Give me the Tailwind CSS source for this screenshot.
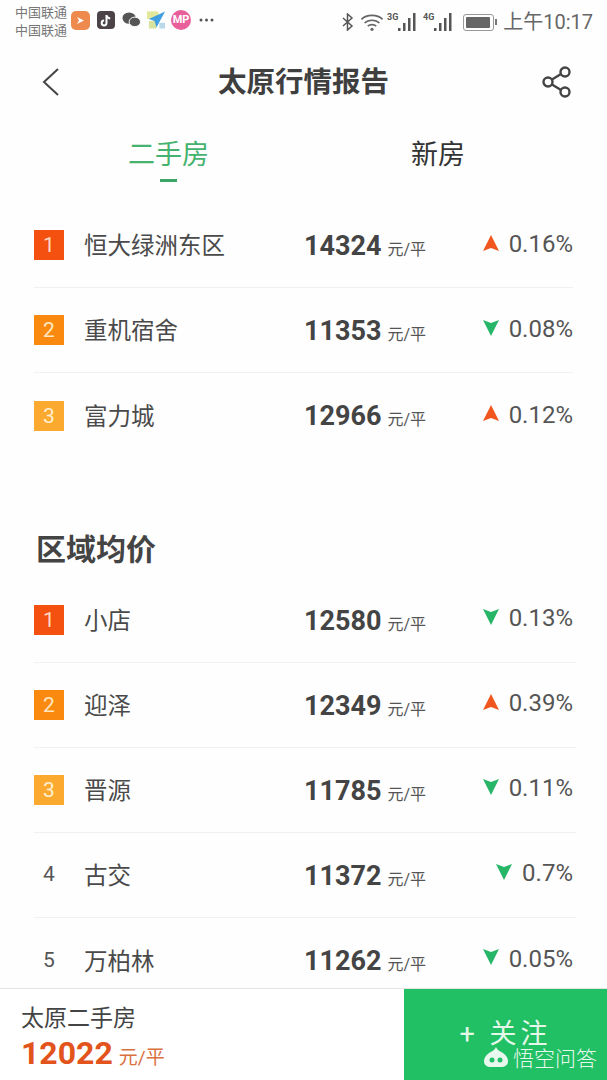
<!DOCTYPE html>
<html lang="zh-CN">
  <head>
    <meta charset="UTF-8" />
    <title>太原行情报告</title>
    <script src="https://cdn.jsdelivr.net/npm/@tailwindcss/browser@4"></script>
  </head>
  <body class="bg-white">
    <div class="relative w-[607px] h-[1080px] overflow-hidden flex flex-col bg-[#fefefe] text-[#444] font-['Roboto','Noto_Sans_CJK_SC',sans-serif]">
      <!-- status bar -->
      <div class="h-[44px] flex items-center pl-[15px] pr-[14px] text-[#666]">
        <div class="text-[13px] leading-[18px] w-[56px] text-[#777]">
          <div>中国联通</div>
          <div>中国联通</div>
        </div>
        <div class="flex items-center -mt-[4px]">
          <div class="w-[19px] h-[19px] rounded-[5px] bg-[#ee8a4e] flex items-center justify-center">
            <svg width="11" height="11" viewBox="0 0 11 11"><path d="M2 2l7 3.500L2 9l2-3.500z" fill="#fff" /></svg>
          </div>
          <div class="w-[18px] h-[18px] ml-[7px] rounded-[4px] bg-[#4b4347] flex items-center justify-center">
            <svg width="12" height="13" viewBox="0 0 12 13" fill="none" stroke="#fff" stroke-width="2"><path d="M6.500 1v8a2.400 2.400 0 1 1-2.400-2.400M6.500 1.500c.5 1.800 1.800 2.800 3.700 3" /></svg>
          </div>
          <svg class="ml-[7px]" width="19" height="18" viewBox="0 0 20 18" fill="#555"><ellipse cx="7.500" cy="7" rx="7" ry="6" /><ellipse cx="13.500" cy="11" rx="6" ry="5" stroke="#fff" stroke-width="1" /></svg>
          <svg class="ml-[5px]" width="20" height="20" viewBox="0 0 21 20"><rect x="1" y="1" width="12" height="8" fill="#e3e79a" /><rect x="3" y="11" width="8" height="8" fill="#d9e3a0" /><rect x="14" y="13" width="6" height="6" fill="#b9d8ea" /><path d="M20 1 3 9l6 2 2 7z" fill="#3f9fe0" /></svg>
          <div class="w-[20px] h-[20px] ml-[5px] rounded-full bg-[#e85f9b] text-white text-[11px] leading-[20px] font-bold text-center">MP</div>
          <svg class="ml-[8px]" width="15" height="4" viewBox="0 0 15 4" fill="#555"><circle cx="2" cy="2" r="1.500" /><circle cx="7.500" cy="2" r="1.500" /><circle cx="13" cy="2" r="1.500" /></svg>
        </div>
        <div class="ml-auto flex items-center">
          <svg width="14" height="18" viewBox="0 0 14 18" fill="none" stroke="#555" stroke-width="1.500"><path d="M2 5l9 8-4.500 4V1L11 5l-9 8" /></svg>
          <svg class="ml-[5px]" width="24" height="19" viewBox="0 0 22 18" fill="none" stroke="#666" stroke-width="1.600"><path d="M1 6c5-5 15-5 20 0M4 9.500c3.500-3.500 10.500-3.500 14 0M7 12.500c2-2 6-2 8 0" /><circle cx="11" cy="15.500" r="1.500" fill="#666" stroke="none" /></svg>
          <svg class="ml-[3px]" width="31" height="20" viewBox="0 0 31 20" fill="#555"><text x="0" y="8" font-size="9" font-weight="700" font-family="Roboto">3G</text><rect x="11" y="16" width="2.500" height="3" /><rect x="16" y="11" width="2.500" height="8" /><rect x="21" y="6" width="2.500" height="13" /><rect x="26" y="1" width="2.500" height="18" /></svg>
          <svg class="ml-[5px]" width="31" height="20" viewBox="0 0 31 20" fill="#555"><text x="0" y="8" font-size="9" font-weight="700" font-family="Roboto">4G</text><rect x="11" y="16" width="2.500" height="3" /><rect x="16" y="11" width="2.500" height="8" /><rect x="21" y="6" width="2.500" height="13" /><rect x="26" y="1" width="2.500" height="18" /></svg>
          <div class="flex items-center ml-[9px]">
            <div class="w-[31px] h-[17px] rounded-[3px] border border-[#999] p-[2px]"><div class="h-full w-[24px] bg-[#666] rounded-[1px]"></div></div>
            <div class="w-[2px] h-[6px] bg-[#777] ml-[1px]"></div>
          </div>
          <div class="text-[20px] leading-none text-[#666] ml-[6px]">上午10:17</div>
        </div>
      </div>

      <!-- title -->
      <div class="relative h-[76px] flex items-center justify-center pt-[2px]">
        <svg class="absolute left-[41px] top-[23px]" width="20" height="30" viewBox="0 0 20 30" fill="none" stroke="#444" stroke-width="2"><path d="M17 2 3 15l14 13" /></svg>
        <h1 class="text-[28.500px] font-bold text-[#3f3f3f] leading-none">太原行情报告</h1>
        <svg class="absolute left-[541px] top-[21px]" width="31" height="33" viewBox="0 0 31 33" fill="none" stroke="#444" stroke-width="2.400"><circle cx="24" cy="7" r="4.500" /><circle cx="7" cy="17" r="4.500" /><circle cx="24" cy="27" r="4.500" /><path d="m11 14.500 9-5.500M11 19.500l9 5.500" /></svg>
      </div>

      <!-- tabs -->
      <div class="h-[83px] flex items-start">
        <div class="w-[337px] flex flex-col items-center pt-[20px]">
          <div class="text-[27px] leading-[30px] text-[#45b36f]">二手房</div>
          <div class="w-[17px] h-[3px] bg-[#3aa566] mt-[9px]"></div>
        </div>
        <div class="w-[202px] text-center pt-[20px] text-[27px] leading-[30px] text-[#333]">新房</div>
      </div>

      <!-- hot communities -->
      <div class="ml-[34px] w-[539px]">
        <div class="h-[85px] flex items-center border-b border-[#f1f1f1]">
          <div class="w-[51px]"><div class="w-[30px] h-[30px] bg-[#f4500f] text-[#ffd9c4] text-[21px] leading-[30px] text-center">1</div></div>
          <div class="w-[220px] mt-[4px] -ml-[1px] text-[23.500px] text-[#4a4a4a]">恒大绿洲东区</div>
          <div class="flex items-baseline mt-[2px]"><span class="text-[27px] font-bold text-[#444]">14324</span><span class="text-[16px] ml-[6px] text-[#555]">元/平</span></div>
          <div class="ml-auto flex items-center gap-[10px] -mt-[2px]">
            <svg class="-mt-[3px]" width="16" height="16" viewBox="0 0 16 16"><path d="M8 0l8 16-8-3-8 3z" fill="#f0561d" /></svg>
            <span class="text-[24px] text-[#555]">0.16%</span>
          </div>
        </div>
        <div class="h-[85px] flex items-center border-b border-[#f1f1f1]">
          <div class="w-[51px]"><div class="w-[30px] h-[30px] bg-[#f98a0f] text-[#ffe6bf] text-[21px] leading-[30px] text-center">2</div></div>
          <div class="w-[220px] mt-[4px] -ml-[1px] text-[23.500px] text-[#4a4a4a]">重机宿舍</div>
          <div class="flex items-baseline mt-[2px]"><span class="text-[27px] font-bold text-[#444]">11353</span><span class="text-[16px] ml-[6px] text-[#555]">元/平</span></div>
          <div class="ml-auto flex items-center gap-[10px] -mt-[2px]">
            <svg class="-mt-[3px]" width="16" height="16" viewBox="0 0 16 16"><path d="M8 16 0 0l8 3 8-3z" fill="#27b568" /></svg>
            <span class="text-[24px] text-[#555]">0.08%</span>
          </div>
        </div>
        <div class="h-[85px] flex items-center">
          <div class="w-[51px]"><div class="w-[30px] h-[30px] bg-[#fba92f] text-[#fff0cf] text-[21px] leading-[30px] text-center">3</div></div>
          <div class="w-[220px] mt-[4px] -ml-[1px] text-[23.500px] text-[#4a4a4a]">富力城</div>
          <div class="flex items-baseline mt-[2px]"><span class="text-[27px] font-bold text-[#444]">12966</span><span class="text-[16px] ml-[6px] text-[#555]">元/平</span></div>
          <div class="ml-auto flex items-center gap-[10px] -mt-[2px]">
            <svg class="-mt-[3px]" width="16" height="16" viewBox="0 0 16 16"><path d="M8 0l8 16-8-3-8 3z" fill="#f0561d" /></svg>
            <span class="text-[24px] text-[#555]">0.12%</span>
          </div>
        </div>
      </div>

      <!-- district average -->
      <h2 class="ml-[36px] mt-[72px] h-[48px] text-[30px] leading-[40px] font-bold text-[#444]">区域均价</h2>
      <div class="ml-[34px] w-[542px] flex-1 min-h-0 overflow-hidden">
        <div class="h-[85px] flex items-center border-b border-[#f1f1f1]">
          <div class="w-[51px]"><div class="w-[30px] h-[30px] bg-[#f4500f] text-[#ffd9c4] text-[21px] leading-[30px] text-center">1</div></div>
          <div class="w-[220px] mt-[4px] -ml-[1px] text-[23.500px] text-[#4a4a4a]">小店</div>
          <div class="flex items-baseline mt-[2px]"><span class="text-[27px] font-bold text-[#444]">12580</span><span class="text-[16px] ml-[6px] text-[#555]">元/平</span></div>
          <div class="ml-auto mr-[3px] flex items-center gap-[10px] -mt-[4px]">
            <svg class="-mt-[3px]" width="16" height="16" viewBox="0 0 16 16"><path d="M8 16 0 0l8 3 8-3z" fill="#27b568" /></svg>
            <span class="text-[24px] text-[#555]">0.13%</span>
          </div>
        </div>
        <div class="h-[85px] flex items-center border-b border-[#f1f1f1]">
          <div class="w-[51px]"><div class="w-[30px] h-[30px] bg-[#f98a0f] text-[#ffe6bf] text-[21px] leading-[30px] text-center">2</div></div>
          <div class="w-[220px] mt-[4px] -ml-[1px] text-[23.500px] text-[#4a4a4a]">迎泽</div>
          <div class="flex items-baseline mt-[2px]"><span class="text-[27px] font-bold text-[#444]">12349</span><span class="text-[16px] ml-[6px] text-[#555]">元/平</span></div>
          <div class="ml-auto mr-[3px] flex items-center gap-[10px] -mt-[4px]">
            <svg class="-mt-[3px]" width="16" height="16" viewBox="0 0 16 16"><path d="M8 0l8 16-8-3-8 3z" fill="#f0561d" /></svg>
            <span class="text-[24px] text-[#555]">0.39%</span>
          </div>
        </div>
        <div class="h-[85px] flex items-center border-b border-[#f1f1f1]">
          <div class="w-[51px]"><div class="w-[30px] h-[30px] bg-[#fba92f] text-[#fff0cf] text-[21px] leading-[30px] text-center">3</div></div>
          <div class="w-[220px] mt-[4px] -ml-[1px] text-[23.500px] text-[#4a4a4a]">晋源</div>
          <div class="flex items-baseline mt-[2px]"><span class="text-[27px] font-bold text-[#444]">11785</span><span class="text-[16px] ml-[6px] text-[#555]">元/平</span></div>
          <div class="ml-auto mr-[3px] flex items-center gap-[10px] -mt-[4px]">
            <svg class="-mt-[3px]" width="16" height="16" viewBox="0 0 16 16"><path d="M8 16 0 0l8 3 8-3z" fill="#27b568" /></svg>
            <span class="text-[24px] text-[#555]">0.11%</span>
          </div>
        </div>
        <div class="h-[85px] flex items-center border-b border-[#f1f1f1]">
          <div class="w-[51px]"><div class="w-[30px] text-[21px] text-center text-[#555]">4</div></div>
          <div class="w-[220px] mt-[4px] -ml-[1px] text-[23.500px] text-[#4a4a4a]">古交</div>
          <div class="flex items-baseline mt-[2px]"><span class="text-[27px] font-bold text-[#444]">11372</span><span class="text-[16px] ml-[6px] text-[#555]">元/平</span></div>
          <div class="ml-auto mr-[3px] flex items-center gap-[10px] -mt-[4px]">
            <svg class="-mt-[3px]" width="16" height="16" viewBox="0 0 16 16"><path d="M8 16 0 0l8 3 8-3z" fill="#27b568" /></svg>
            <span class="text-[24px] text-[#555]">0.7%</span>
          </div>
        </div>
        <div class="h-[85px] flex items-center">
          <div class="w-[51px]"><div class="w-[30px] text-[21px] text-center text-[#555]">5</div></div>
          <div class="w-[220px] mt-[4px] -ml-[1px] text-[23.500px] text-[#4a4a4a]">万柏林</div>
          <div class="flex items-baseline mt-[2px]"><span class="text-[27px] font-bold text-[#444]">11262</span><span class="text-[16px] ml-[6px] text-[#555]">元/平</span></div>
          <div class="ml-auto mr-[3px] flex items-center gap-[10px] -mt-[4px]">
            <svg class="-mt-[3px]" width="16" height="16" viewBox="0 0 16 16"><path d="M8 16 0 0l8 3 8-3z" fill="#27b568" /></svg>
            <span class="text-[24px] text-[#555]">0.05%</span>
          </div>
        </div>
      </div>

      <!-- bottom bar -->
      <div class="h-[92px] flex border-t border-[#e4e4e4] bg-white">
        <div class="w-[404px] pl-[21px] pt-[14px]">
          <div class="text-[23px] leading-[32px] text-[#444]">太原二手房</div>
          <div class="flex items-baseline leading-[36px]"><span class="text-[32px] font-bold text-[#e2541c]">12022</span><span class="text-[19px] ml-[6px] text-[#d9703f]">元/平</span></div>
        </div>
        <div class="flex-1 bg-[#21c065] text-[#e4f8ea] text-[27px] tracking-[4px] flex justify-center pt-[27px] leading-[36px]">+ 关注</div>
      </div>

      <!-- watermark -->
      <div class="absolute left-[484px] top-[1044px] flex items-center gap-[5px] text-[#e9f8ee]">
        <svg width="24" height="21" viewBox="0 0 24 21" fill="#e9f8ee"><path d="M12 0c1 3 4 4 7 6 3 2 5 5 5 8 0 4-3 6-7 6H7c-4 0-7-2-7-6 0-3 2-6 5-8 3-2 6-3 7-6z" /><circle cx="8" cy="13" r="2.500" fill="#21c065" /><circle cx="16" cy="13" r="2.500" fill="#21c065" /></svg>
        <span class="text-[21px] leading-[26px] font-['Noto_Sans_CJK_SC',sans-serif] font-light">悟空问答</span>
      </div>
    </div>
  </body>
</html>
